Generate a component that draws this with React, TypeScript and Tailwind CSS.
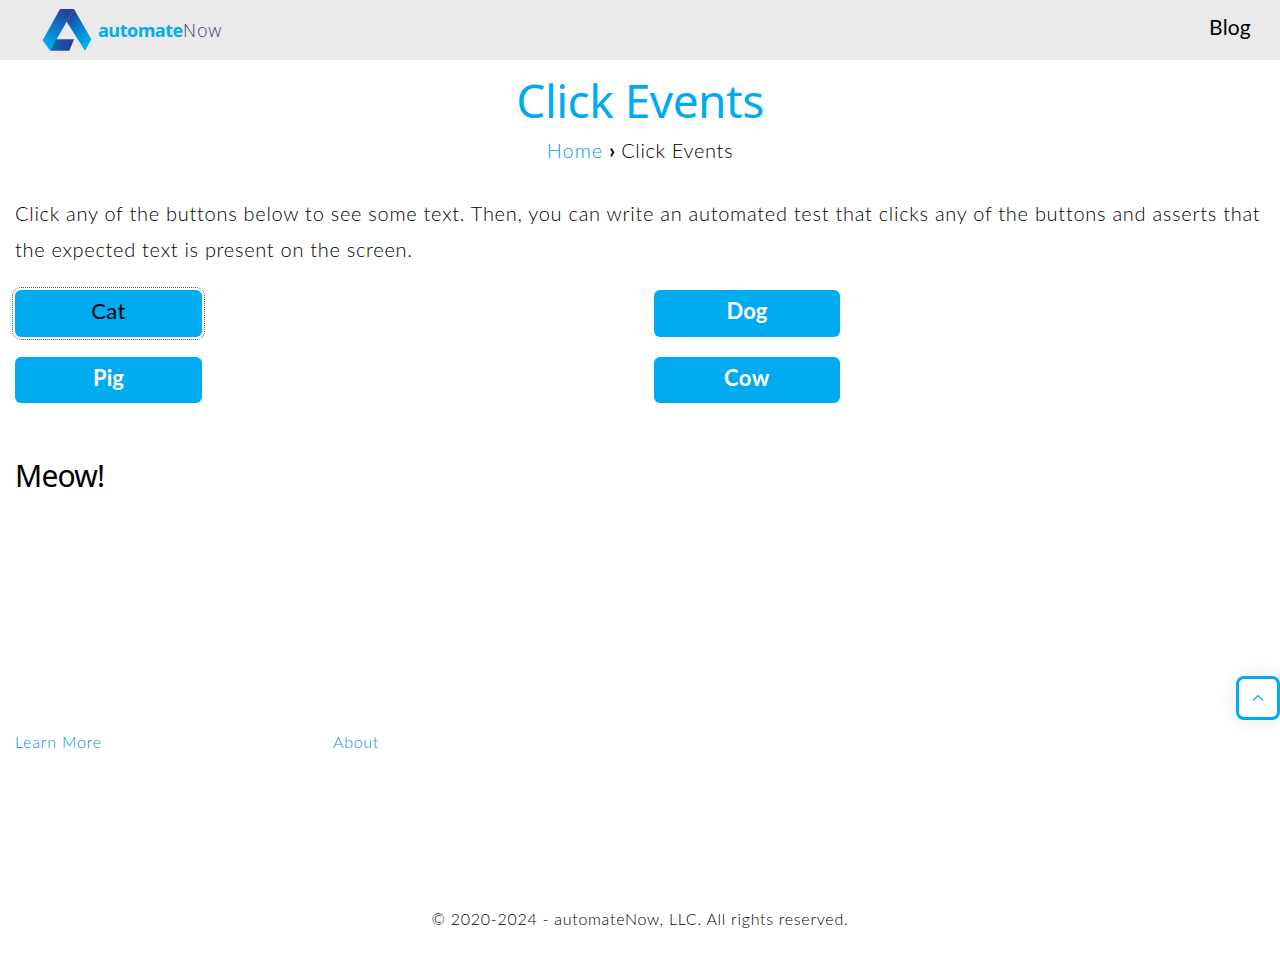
import React from 'react';

function Logo() {
  return (
    <a href="#" className="ml-[42px] flex items-center" aria-label="automateNow">
      <svg width="50" height="44" viewBox="36 24 150 132" aria-hidden="true">
        <defs>
          <linearGradient id="left" x1="0.7" y1="0" x2="0.2" y2="1">
            <stop offset="0" stopColor="#24409b" />
            <stop offset="0.45" stopColor="#0877c5" />
            <stop offset="1" stopColor="#00b3f3" />
          </linearGradient>
          <linearGradient id="right" x1="0.2" y1="0" x2="0.8" y2="1">
            <stop offset="0" stopColor="#28318c" />
            <stop offset="0.45" stopColor="#087fcb" />
            <stop offset="1" stopColor="#00b9f5" />
          </linearGradient>
          <linearGradient id="base" x1="0" y1="0" x2="1" y2="0">
            <stop offset="0" stopColor="#0b6db9" />
            <stop offset="1" stopColor="#2b3590" />
          </linearGradient>
        </defs>
        <path d="M90 27H132L110 65L60 152L38 121Z" fill="url(#left)" />
        <path d="M132 27L184 118L165 152L110 65Z" fill="url(#right)" />
        <path d="M78 118H132L118 152H60Z" fill="url(#base)" />
      </svg>
      <span className="ml-[6px] flex pb-px font-['Open_Sans',sans-serif] text-[18px] leading-6">
        <b className="w-[85px] tracking-[-0.5px] text-[#00adef]">automate</b>
        <span className="font-light tracking-[0.9px] text-[#3d4275]">Now</span>
      </span>
    </a>
  );
}

const button =
  "rounded-[6px] bg-[#00abf0] pb-[5px] text-center text-[22px] leading-7";

export default function App() {
  return (
    <div className="h-[974px] overflow-hidden bg-white font-[Lato,sans-serif] text-black">
      <header className="flex h-[60px] items-center justify-between bg-[#eaeaea] pr-[29px]">
        <Logo />
        <a href="#" className="mb-[6px] text-[21px] leading-7 tracking-[0.2px]">Blog</a>
      </header>
      <main className="px-[15px]">
        <h1 className="pt-[8px] text-center font-['Noto_Sans',sans-serif] text-[46px] leading-[64px] text-[#00abf0]">
          <span className="tracking-[-0.5px]">Click Events</span>
        </h1>
        <nav className="mt-[4px] flex justify-center gap-[6px] text-[20px] leading-7 whitespace-nowrap">
          <a href="#" className="font-light tracking-[1px] text-[#00a0ee]">Home</a>
          <span className="font-bold">›</span>
          <span className="font-light tracking-[0.65px]">Click Events</span>
        </nav>
        <p className="mt-[31px] text-[20px] leading-9 font-light whitespace-nowrap">
          <span className="tracking-[0.72px]">
            Click any of the buttons below to see some text. Then, you can write an automated test that clicks any of the buttons and asserts that
          </span>
          <br />
          <span className="tracking-[0.7px]">the expected text is present on the screen.</span>
        </p>
        <div className="mt-[23px] grid grid-cols-[187px_186px] grid-rows-[47px_46px] gap-x-[452px] gap-y-[20px]">
          <button className={button + " tracking-[0.4px] outline-1 outline-offset-2 outline-dotted outline-[#555]"}>Cat</button>
          <button className={button + " font-bold text-white"}>Dog</button>
          <button className={button + " font-bold text-white"}>Pig</button>
          <button className={button + " font-bold tracking-[0.5px] text-white"}>Cow</button>
        </div>
        <h2 className="mt-[53px] font-['Noto_Sans',sans-serif] text-[30px] leading-10">
          <span className="tracking-[-0.8px]">Meow!</span>
        </h2>
      </main>
      <div className="mt-[180px] flex justify-end">
        <button aria-label="Scroll to top" className="flex size-[44px] items-center justify-center rounded-[8px] border-[3px] border-[#00abf0] bg-white shadow-[0_0_20px_rgba(0,0,0,0.1)]">
          <svg width="12" height="8" viewBox="0 0 12 8" fill="none" stroke="#00abf0" strokeWidth="1.1" aria-hidden="true">
            <path d="M1 6.5L6 1.5L11 6.5" />
          </svg>
        </button>
      </div>
      <footer className="px-[15px] font-light">
        <div className="mt-[10px] grid grid-cols-[318px_1fr] text-[16px] leading-6 text-[#008fea]">
          <a href="#"><span className="tracking-[0.8px]">Learn More</span></a>
          <a href="#"><span className="tracking-[0.7px]">About</span></a>
        </div>
        <p className="mt-[153px] text-center text-[16px] leading-6">
          <span className="tracking-[0.72px]">© 2020-2024 - automateNow, LLC. All rights reserved.</span>
        </p>
      </footer>
    </div>
  );
}
